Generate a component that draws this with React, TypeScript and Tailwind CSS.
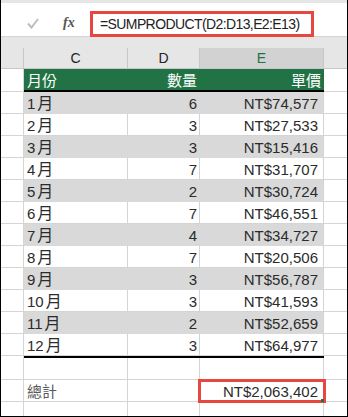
import React from "react";

const rows: [string, number, string][] = [
  ["1", 6, "NT$74,577"],
  ["2", 3, "NT$27,533"],
  ["3", 3, "NT$15,416"],
  ["4", 7, "NT$31,707"],
  ["5", 2, "NT$30,724"],
  ["6", 7, "NT$46,551"],
  ["7", 4, "NT$34,727"],
  ["8", 7, "NT$20,506"],
  ["9", 3, "NT$56,787"],
  ["10", 3, "NT$41,593"],
  ["11", 2, "NT$52,659"],
  ["12", 3, "NT$64,977"],
];

function DataRow({ c, d, e, gray }: { c: string; d: number; e: string; gray: boolean }) {
  const cell = gray ? "bg-[#d9d9d9] border-[#d9d9d9]" : "bg-white border-[#d4d4d4]";
  return (
    <div className="flex h-[22px] text-[15px] leading-[24px] text-[#2b2b2b]">
      <div className="w-[23px] shrink-0 border-r border-b border-[#d4d4d4]" />
      <div className={`w-[104px] shrink-0 pl-[3px] border-r border-b whitespace-nowrap ${cell}`}>
        {c}
        <span className="ml-[2px] text-[16px]">月</span>
      </div>
      <div className={`w-[72px] shrink-0 pr-[2px] text-right border-r border-b ${cell}`}>{d}</div>
      <div className={`w-[124px] shrink-0 pr-[5px] text-right border-r border-b ${gray ? "bg-[#d9d9d9] border-b-[#d9d9d9]" : "bg-white border-b-[#d4d4d4]"} border-r-[#d4d4d4]`}>{e}</div>
      <div className="flex-1 border-b border-[#d4d4d4]" />
    </div>
  );
}

function PlainRow({ c, e, cClass = "" }: { c?: string; e?: string; cClass?: string }) {
  return (
    <div className="flex h-[22px] text-[15px] leading-[24px] text-[#2b2b2b]">
      <div className="w-[23px] shrink-0 border-r border-b border-[#d4d4d4]" />
      <div className={`w-[104px] shrink-0 pl-[3px] border-r border-b border-[#d4d4d4] ${cClass}`}>{c}</div>
      <div className="w-[72px] shrink-0 border-r border-b border-[#d4d4d4]" />
      <div className="w-[124px] shrink-0 pr-[5px] text-right border-r border-b border-[#d4d4d4]">{e}</div>
      <div className="flex-1 border-b border-[#d4d4d4]" />
    </div>
  );
}

export default function App() {
  return (
    <div className="relative w-[348px] h-[417px] overflow-hidden bg-white border-x border-b border-black flex flex-col font-['Liberation_Sans','Noto_Sans_CJK_TC',sans-serif]">
      {/* formula bar */}
      <div className="h-[37px] shrink-0 bg-white border-t-[3px] border-t-[#e6e6e6] border-b border-b-[#d4d4d4] flex items-start">
        <svg className="ml-[26px] mt-[15px]" width="12" height="11" viewBox="0 0 12 11">
          <path d="M1 5.5 L4.5 9.5 L11 1" fill="none" stroke="#bdbdbd" strokeWidth="2" />
        </svg>
        <div className="ml-[24px] mt-[12px] text-[14px] leading-[16px] italic font-bold text-[#555] font-['Liberation_Serif',serif]">
          fx
        </div>
      </div>
      {/* gray band */}
      <div className="h-[11px] shrink-0 bg-[#e6e6e6]" />
      {/* column headers */}
      <div className="flex h-[21px] shrink-0 text-[14px] leading-[21px] text-center">
        <div className="w-[23px] shrink-0 bg-[#e6e6e6] border-r border-b border-[#c6c6c6]" />
        <div className="w-[104px] shrink-0 bg-[#e6e6e6] border-r border-b border-[#c6c6c6] text-[#222]">C</div>
        <div className="w-[72px] shrink-0 bg-[#e6e6e6] border-r border-b border-[#c6c6c6] text-[#222]">D</div>
        <div className="w-[124px] shrink-0 bg-[#d2d2d2] border-r border-b border-[#c6c6c6] text-[#217346]">E</div>
        <div className="flex-1 bg-[#e6e6e6] border-b border-[#c6c6c6]" />
      </div>
      {/* green table header */}
      <div className="flex h-[21px] shrink-0 text-[15px] leading-[21px] text-white font-['Noto_Sans_CJK_TC',sans-serif]">
        <div className="w-[23px] shrink-0 border-r border-[#d4d4d4]" />
        <div className="w-[104px] shrink-0 bg-[#217346] pl-[3px]">月份</div>
        <div className="w-[72px] shrink-0 bg-[#217346] pr-[3px] text-right">數量</div>
        <div className="w-[124px] shrink-0 bg-[#217346] pr-[3px] text-right">單價</div>
        <div className="flex-1" />
      </div>
      <div className="flex h-[2px] shrink-0">
        <div className="w-[23px] shrink-0 border-r border-b border-[#d4d4d4]" />
        <div className="w-[300px] shrink-0 bg-black" />
        <div className="flex-1 border-b border-[#d4d4d4]" />
      </div>
      {rows.map((r, i) => (
        <DataRow key={i} c={r[0]} d={r[1]} e={r[2]} gray={i % 2 === 0} />
      ))}
      <div className="flex h-[2px] shrink-0">
        <div className="w-[23px] shrink-0 border-r border-[#d4d4d4]" />
        <div className="w-[300px] shrink-0 bg-black" />
        <div className="flex-1" />
      </div>
      <PlainRow />
      <PlainRow c="總計" cClass="text-[#595959]" e="NT$2,063,402" />
      <div className="flex flex-1">
        <div className="w-[23px] shrink-0 border-r border-[#d4d4d4]" />
        <div className="w-[104px] shrink-0 border-r border-[#d4d4d4]" />
        <div className="w-[72px] shrink-0 border-r border-[#d4d4d4]" />
        <div className="w-[124px] shrink-0 border-r border-[#d4d4d4]" />
        <div className="flex-1" />
      </div>

      {/* annotation: formula box */}
      <div className="absolute left-[89px] top-[11px] w-[224px] h-[26px] border-[3px] border-[#e8473f] bg-white pl-[7px] text-[14px] leading-[20px] tracking-[-0.6px] text-[#222] whitespace-nowrap">
        =SUMPRODUCT(D2:D13,E2:E13)
      </div>
      {/* annotation: total box */}
      <div className="absolute left-[197px] top-[379px] w-[128px] h-[24px] border-[3px] border-[#e8473f]" />
      <div className="absolute left-[320px] top-[399px] w-[3px] h-[3px] bg-[#217346]" />
    </div>
  );
}
